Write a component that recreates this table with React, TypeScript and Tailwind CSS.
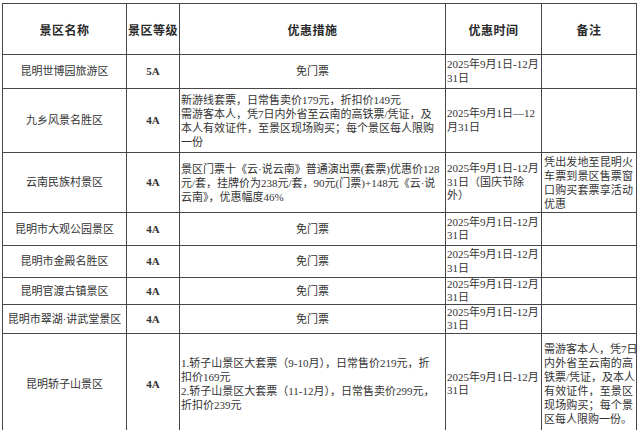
import React from "react";

type Row = {
  name: string;
  level: string;
  offer: string[] | null; // null => 免门票 centered
  date: string[];
  note?: string[];
};

const DATE = ["2025年9月1日-12月", "31日"];

const ROWS: Row[] = [
  { name: "昆明世博园旅游区", level: "5A", offer: null, date: DATE },
  {
    name: "九乡风景名胜区",
    level: "4A",
    offer: [
      "新游线套票，日常售卖价179元，折扣价149元",
      "需游客本人，凭7日内外省至云南的高铁票/凭证，及",
      "本人有效证件，至景区现场购买；每个景区每人限购",
      "一份",
    ],
    date: ["2025年9月1日—12", "月31日"],
  },
  {
    name: "云南民族村景区",
    level: "4A",
    offer: [
      "景区门票十《云·说云南》普通演出票(套票)优惠价128",
      "元/套，挂牌价为238元/套，90元(门票)+148元《云·说",
      "云南》，优惠幅度46%",
    ],
    date: ["2025年9月1日-12月", "31日（国庆节除", "外）"],
    note: ["凭出发地至昆明火", "车票到景区售票窗", "口购买套票享活动", "优惠"],
  },
  { name: "昆明市大观公园景区", level: "4A", offer: null, date: DATE },
  { name: "昆明市金殿名胜区", level: "4A", offer: null, date: DATE },
  { name: "昆明官渡古镇景区", level: "4A", offer: null, date: DATE },
  { name: "昆明市翠湖·讲武堂景区", level: "4A", offer: null, date: DATE },
  {
    name: "昆明轿子山景区",
    level: "4A",
    offer: [
      "1.轿子山景区大套票（9-10月），日常售价219元，折",
      "扣价169元",
      "2.轿子山景区大套票（11-12月），日常售卖价299元，",
      "折扣价239元",
    ],
    date: DATE,
    note: [
      "需游客本人，凭7日",
      "内外省至云南的高",
      "铁票/凭证，及本人",
      "有效证件，至景区",
      "现场购买；每个景",
      "区每人限购一份。",
    ],
  },
];

const HEADERS = ["景区名称", "景区等级", "优惠措施", "优惠时间", "备注"];

export default function App() {
  return (
    <div
      className="h-[430px] w-[640px] overflow-hidden bg-white text-[#333]"
      style={{ fontFamily: '"Liberation Serif", "Noto Sans CJK SC", serif' }}
    >
      <div className="ml-[2px] mt-[3px] grid w-fit grid-cols-[123px_52px_265px_95px_94px] grid-rows-[50px_33px_63px_59px_32px_31px_26px_28px_100px] gap-px bg-[#474747] p-px">
        {HEADERS.map((h) => (
          <div
            key={h}
            className="flex items-center justify-center bg-white pt-[3px] text-[12px] font-bold tracking-[0.5px] text-[#2a2a2a]"
          >
            {h}
          </div>
        ))}

        {ROWS.map((r) => (
          <React.Fragment key={r.name}>
            <div className="flex items-center justify-center bg-white text-[11px] whitespace-nowrap">
              {r.name}
            </div>
            <div className="flex items-center justify-center bg-white text-[11px] font-bold">
              {r.level}
            </div>
            {r.offer ? (
              <div className="flex flex-col justify-center overflow-hidden bg-white pl-[1px] text-[11px] leading-[14px]">
                {r.offer.map((l, i) => (
                  <div key={i} className="whitespace-nowrap">{l}</div>
                ))}
              </div>
            ) : (
              <div className="flex items-center justify-center bg-white text-[11px]">免门票</div>
            )}
            <div className="flex flex-col justify-center overflow-hidden bg-white pl-[1px] text-[11px] leading-[13.5px]">
              {r.date.map((l, i) => (
                <div key={i} className="whitespace-nowrap">{l}</div>
              ))}
            </div>
            <div className="flex flex-col justify-center overflow-hidden bg-white pl-[2px] text-[11px] leading-[14px]">
              {(r.note ?? []).map((l, i, a) => (
                <div
                  key={i}
                  className={
                    i < a.length - 1
                      ? "w-[89px] text-justify whitespace-nowrap [text-align-last:justify]"
                      : "whitespace-nowrap"
                  }
                >
                  {l}
                </div>
              ))}
            </div>
          </React.Fragment>
        ))}
      </div>
    </div>
  );
}
